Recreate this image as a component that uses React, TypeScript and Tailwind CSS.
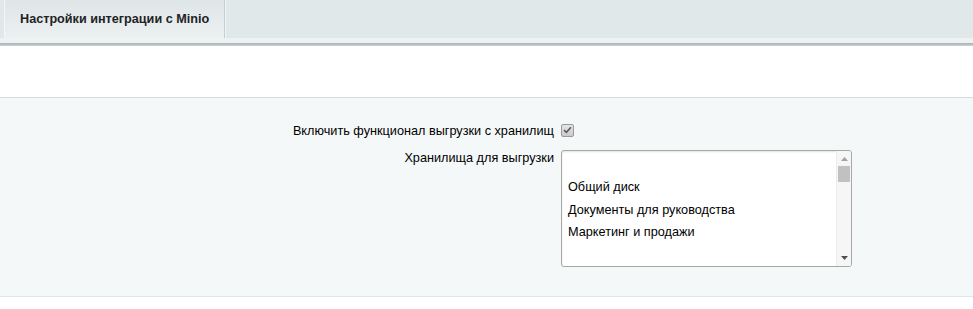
import React from "react";

export default function App() {
  const options = ["", "Общий диск", "Документы для руководства", "Маркетинг и продажи"];
  return (
    <div className="w-[973px] h-[309px] bg-white font-['Liberation_Sans',Arial,sans-serif] text-[12.7px] text-black overflow-hidden">
      {/* tab header */}
      <div className="h-[38px] bg-[#e1e8ea] flex pl-[4px]">
        <div className="w-[221px] h-[38px] border-l border-l-[#f3f6f7] border-r border-r-[#c5cfd2] bg-gradient-to-b from-[#dfe6e8] to-[#ecf0f1] flex items-center pl-[15px] pb-[1px]">
          <span className="font-bold text-[12.65px] text-[#1e2326] leading-[16px]">Настройки интеграции с Minio</span>
        </div>
        <div className="flex-1 border-l border-l-[#f1f4f5]" />
      </div>
      <div className="h-[5px] bg-[#eef2f3]" />
      <div className="h-[3px] bg-gradient-to-b from-[#a8b3b5] to-[#c9d2d4]" />
      <div className="h-[51px] bg-white" />
      {/* form area */}
      <div className="h-[200px] bg-[#f5f8f9] border-t border-t-[#d3dee2] border-b border-b-[#dde6ea] pt-[24px]">
        <div className="flex items-center h-[16px]">
          <div className="w-[554px] text-right leading-[16px] pt-[1px]">Включить функционал выгрузки с хранилищ</div>
          <div className="ml-[7px] w-[13px] h-[13px] rounded-[2px] border border-[#9a9a9a] bg-gradient-to-b from-[#e6e6e6] to-[#c9c9c9] flex items-center justify-center">
            <svg width="9" height="8" viewBox="0 0 9 8">
              <path d="M1 4.2 L3.4 6.4 L8 1.2" fill="none" stroke="#5a5a5a" strokeWidth="1.6" />
            </svg>
          </div>
        </div>
        <div className="flex items-start mt-[12px]">
          <div className="w-[554px] text-right leading-[16px]">Хранилища для выгрузки</div>
          <div className="ml-[7px] w-[291px] h-[117px] rounded-[3px] border border-[#a7a7a7] bg-white shadow-[inset_0_1px_2px_rgba(0,0,0,0.12)] flex">
            <div className="flex-1 pt-[2.5px]">
              {options.map((o, i) => (
                <div key={i} className="h-[22.5px] leading-[22.5px] pl-[6px] whitespace-nowrap">
                  {o}
                </div>
              ))}
            </div>
            <div className="w-[15px] bg-[#f6f6f6] border-l border-l-[#ececec] flex flex-col items-center rounded-r-[2px]">
              <div className="h-[14px] flex items-center justify-center pt-[2px]">
                <svg width="7" height="4" viewBox="0 0 7 4">
                  <path d="M0 4 L3.5 0 L7 4 Z" fill="#a3a3a3" />
                </svg>
              </div>
              <div className="w-[12px] h-[16px] bg-[#c1c1c1] mt-[1px]" />
              <div className="flex-1" />
              <div className="h-[14px] flex items-center justify-center pb-[2px]">
                <svg width="7" height="4" viewBox="0 0 7 4">
                  <path d="M0 0 L7 0 L3.5 4 Z" fill="#505050" />
                </svg>
              </div>
            </div>
          </div>
        </div>
      </div>
    </div>
  );
}
